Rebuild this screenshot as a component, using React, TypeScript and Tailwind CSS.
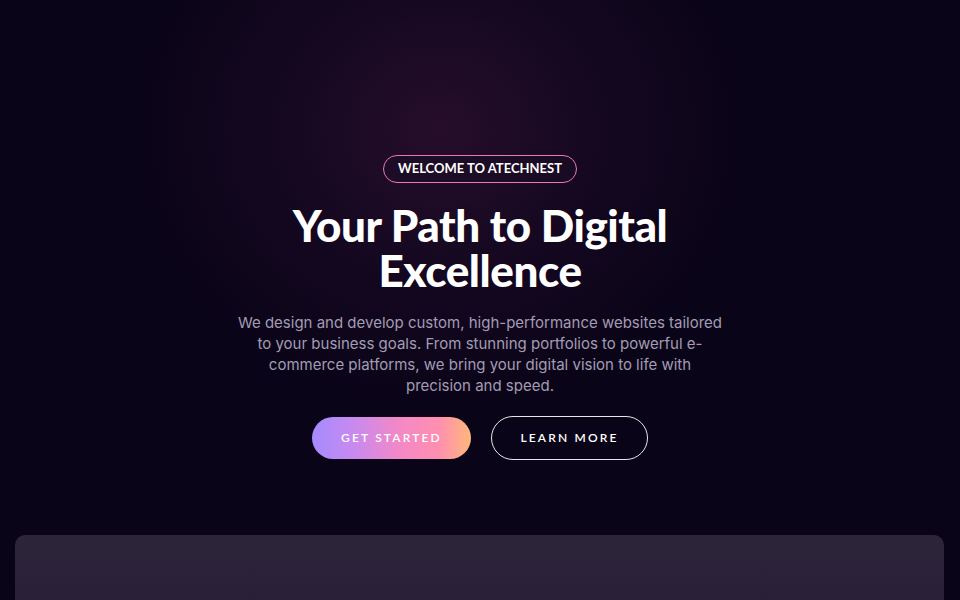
import React from 'react';

const headingFont = { fontFamily: 'Lato, "Noto Sans", sans-serif' };

export default function App() {
    return (
        <div className="relative w-full h-[600px] overflow-hidden bg-[#0a0418] font-['Inter',sans-serif]">
            {/* glow behind the hero */}
            <div className="pointer-events-none absolute left-[130px] top-[-150px] w-[620px] h-[560px] rounded-full bg-[radial-gradient(closest-side,rgba(50,18,50,0.7),rgba(34,12,42,0.4)_55%,rgba(10,4,24,0)_100%)]" />

            <div className="relative flex flex-col items-center pt-[155px]">
                <div className="h-[28px] px-[14px] flex items-center rounded-full border border-[#e879b4] bg-[#1a0e24]/60">
                    <span className="text-[13px] font-bold text-white uppercase" style={headingFont}>Welcome to ATechNest</span>
                </div>

                <h1 className="mt-[20px] text-[44px] leading-[45px] font-black text-white text-center tracking-[-0.01em]" style={headingFont}>
                    <span className="block">Your Path to Digital</span>
                    <span className="block">Excellence</span>
                </h1>

                <p className="mt-[19px] max-w-[486px] text-center text-[15px] leading-[21px] text-[#a39cb4]">
                    We design and develop custom, high-performance websites tailored to your business goals. From stunning portfolios to powerful e-commerce platforms, we bring your digital vision to life with precision and speed.
                </p>

                <div className="mt-[20px] flex items-center gap-[20px]">
                    <button className="h-[42px] w-[159px] rounded-full bg-[linear-gradient(90deg,#a58bff_0%,#c68af0_25%,#f388c6_55%,#ff8fb0_80%,#ffb87a_100%)] text-[12px] font-semibold text-white uppercase tracking-[0.18em]" style={headingFont}>
                        Get Started
                    </button>
                    <button className="h-[44px] w-[157px] rounded-full border border-white/90 text-[12px] font-semibold text-white uppercase tracking-[0.18em]" style={headingFont}>
                        Learn More
                    </button>
                </div>
            </div>

            <div className="absolute left-[15px] right-[16px] top-[535px] h-[80px] rounded-t-[10px] bg-[linear-gradient(180deg,#2d2539,#281f38)]" />
        </div>
    );
}
